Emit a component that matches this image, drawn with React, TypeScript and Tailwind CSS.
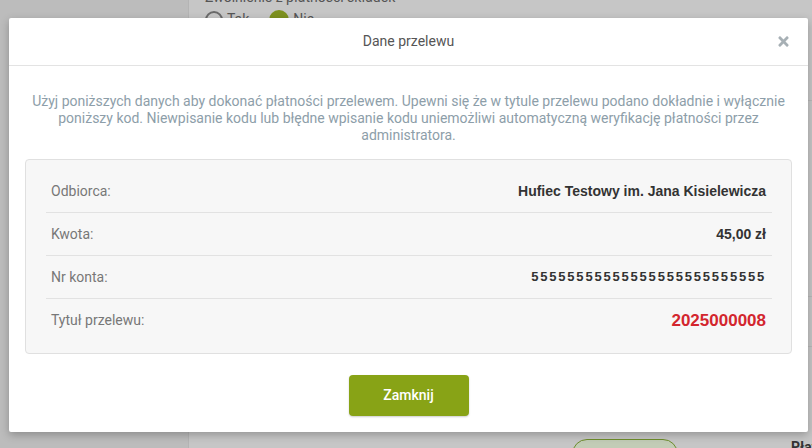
import { FaTimes } from 'react-icons/fa'

const rows = [
    { label: 'Odbiorca:', value: 'Hufiec Testowy im. Jana Kisielewicza', kind: 'text' },
    { label: 'Kwota:', value: '45,00 zł', kind: 'text' },
    { label: 'Nr konta:', value: '55555555555555555555555555', kind: 'account' },
    { label: 'Tytuł przelewu:', value: '2025000008', kind: 'code' },
]

function valueClass(kind: string) {
    if (kind === 'account') return "font-['Liberation_Sans',Arial,sans-serif] font-bold text-[13px] tracking-[1.8px] text-[#333]"
    if (kind === 'code') return "font-['Liberation_Sans',Arial,sans-serif] font-bold text-[17px] text-[#d3262e]"
    return "font-['Liberation_Sans',Arial,sans-serif] font-bold text-[14px] text-[#333]"
}

function PaymentModal() {
    return (
        <div className="absolute left-[9px] top-[18px] w-[799px] bg-white rounded-[2px] shadow-[0_3px_8px_rgba(0,0,0,0.25)]">
            <div className="relative h-[48px] flex items-center justify-center border-b border-[#e3e3e3]">
                <h3 className="text-[14px] text-[#555]">Dane przelewu</h3>
                <button className="absolute right-[17px] top-[16px] text-[#a7b0b5]">
                    <FaTimes size={15} />
                </button>
            </div>

            <div className="px-4 pt-[27px] pb-4">
                <p className="text-center text-[14px] leading-[17px] text-[#8d9ea9]">
                    Użyj poniższych danych aby dokonać płatności przelewem. Upewni się że w tytule przelewu podano dokładnie i wyłącznie poniższy kod. Niewpisanie kodu lub błędne wpisanie kodu uniemożliwi automatyczną weryfikację płatności przez administratora.
                </p>

                <div className="mt-[15px] bg-[#f7f7f7] border border-[#e0e0e0] rounded-[4px] pl-[20px] pr-[19px] pt-[10px] pb-[11px]">
                    {rows.map((row, i) => (
                        <div
                            key={row.label}
                            className={`h-[43px] flex items-center justify-between pl-[5px] pr-[6px] ${i < rows.length - 1 ? 'border-b border-[#e2e2e2]' : ''}`}
                        >
                            <span className="text-[14px] text-[#777]">{row.label}</span>
                            <span className={valueClass(row.kind)}>{row.value}</span>
                        </div>
                    ))}
                </div>

                <div className="mt-[21px] flex justify-center">
                    <button className="w-[120px] h-[41px] rounded-[4px] bg-[#88a316] text-white text-[14px] font-medium shadow-[0_1px_2px_rgba(0,0,0,0.2)]">
                        Zamknij
                    </button>
                </div>
            </div>
        </div>
    )
}

export default function App() {
    return (
        <div className="relative w-[812px] h-[448px] overflow-hidden flex font-['Roboto',sans-serif]">
            <aside className="w-[189px] shrink-0 bg-[#bcbcbc] border-r border-[#b4b4b4]" />

            <main className="flex-1 bg-[#c6c6c6] flex flex-col pl-[16px]">
                <div className="-mt-[11px] text-[14px] leading-[17px] text-[#555]">Zwolnienie z płatności składek</div>
                <div className="mt-[3px] flex items-center gap-[4px] text-[14px] text-[#555]">
                    <span className="w-[18px] h-[18px] rounded-full border-2 border-[#6a6a6a]" />
                    <span className="mr-[16px]">Tak</span>
                    <span className="w-[20px] h-[20px] rounded-full bg-[#7d911f]" />
                    <span>Nie</span>
                </div>

                <div className="mt-[70px] border-t border-[#b8b8b8]" />
                <div className="mt-[168px] flex justify-end text-[14px] text-[#3f6f95]">
                    <span>lista</span>
                </div>
                <div className="mt-[6px] border-t border-[#b8b8b8]" />
                <div className="mt-[20px] flex justify-end text-[14px] text-[#444]">
                    <span>Brak</span>
                </div>
                <div className="mt-[8px] border-t border-[#b8b8b8]" />
                <div className="mt-[18px] flex flex-col items-end text-[14px] leading-[18px] text-[#3f6f95]">
                    <span>lista</span>
                    <span>11</span>
                </div>

                <div className="mt-auto flex items-start h-[9px]">
                    <span className="ml-[367px] w-[106px] h-[30px] rounded-full border border-[#6e8d2c] bg-[#c2ccb6]" />
                    <span className="ml-[113px] text-[14px] font-bold text-[#333] leading-[16px]">Płatności</span>
                </div>
            </main>

            <PaymentModal />
        </div>
    )
}
